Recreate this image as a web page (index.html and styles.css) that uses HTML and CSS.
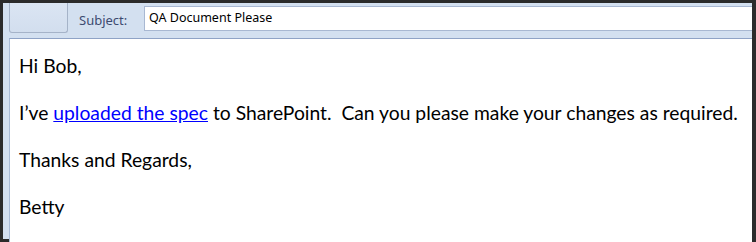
FILE: index.html
```html
<!DOCTYPE html>
<html lang="en">
<head>
  <meta charset="UTF-8" />
  <title>QA Document Please</title>
  <link rel="stylesheet" href="styles.css">
</head>
<body>
  <div class="frame">
    <div class="header">
      <div class="send-btn"></div>
      <label class="subject-label" for="subject">Subject:</label>
      <div class="subject-box" id="subject">QA Document Please</div>
    </div>
    <div class="message">
      <p>Hi Bob,</p>
      <p>I’ve <a href="#">uploaded the spec</a> to SharePoint.&nbsp; Can you please make your changes as required.</p>
      <p>Thanks and Regards,</p>
      <p>Betty</p>
    </div>
  </div>
</body>
</html>
```

FILE: styles.css
```css
html, body { margin: 0; height: 100%; background: #2b2b2b; }
.frame { box-sizing: border-box; height: 242px; width: 756px; border: 3px solid #2b2b2b; border-right-width: 4px; background: #d3e0f0; display: flex; flex-direction: column; }
.header { height: 35px; display: flex; align-items: flex-start; flex-shrink: 0; }
.send-btn { box-sizing: border-box; width: 59px; height: 30px; margin-left: 6px; border: 1px solid #a5b3c8; border-top: none; border-radius: 0 0 3px 3px; background: linear-gradient(#dbe5f3, #d2deee); }
.subject-label { margin: 8px 0 0 11px; width: 65px; font-family: "Noto Sans", sans-serif; font-size: 13px; color: #3d4b70; }
.subject-box { box-sizing: border-box; flex: 1; height: 25px; margin-top: 3px; padding: 2px 0 0 4px; background: #fff; border: 1px solid #a8b8d2; border-right: none; font-family: "Noto Sans", sans-serif; font-size: 12.5px; color: #000; }
.message { flex: 1; margin-left: 6px; background: #fff; border-top: 1px solid #8fa3c6; border-left: 1px solid #a9bbd6; padding: 15px 0 0 9px; font-family: Lato, sans-serif; font-size: 19.3px; color: #000; }
.message p { margin: 0 0 23px; line-height: 24px; }
.message a { color: #0000ff; }
```
